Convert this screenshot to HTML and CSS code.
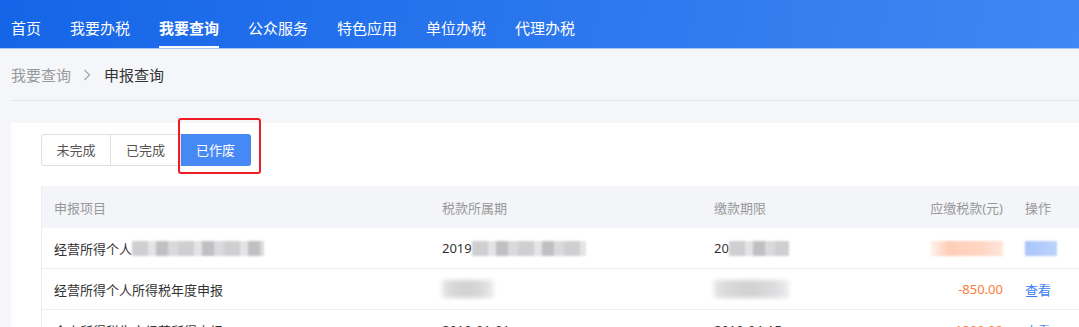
FILE: index.html
```html
<!DOCTYPE html>
<html lang="zh-CN">
<head>
    <meta charset="UTF-8">
    <title>申报查询</title>
    <link rel="stylesheet" href="styles.css">
</head>
<body>
<div class="nav">
    <a class="navItem">首页</a>
    <a class="navItem">我要办税</a>
    <a class="navItem active">我要查询</a>
    <a class="navItem">公众服务</a>
    <a class="navItem">特色应用</a>
    <a class="navItem">单位办税</a>
    <a class="navItem">代理办税</a>
</div>
<div class="main">
    <div class="crumb">
        <span class="crumbLink">我要查询</span>
        <svg class="chevron" width="8" height="12" viewBox="0 0 8 12"><path d="M1.5 1 L6.5 6 L1.5 11" fill="none" stroke="#a3a6ab" stroke-width="1.2"/></svg>
        <span class="crumbCur">申报查询</span>
    </div>
    <div class="card">
        <div class="tabs">
            <span class="tab">未完成</span>
            <span class="tab">已完成</span>
            <span class="tab on">已作废<i class="mark"></i></span>
        </div>
        <div class="table">
            <div class="row head">
                <span class="c1">申报项目</span>
                <span class="c2">税款所属期</span>
                <span class="c3">缴款期限</span>
                <span class="c4">应缴税款(元)</span>
                <span class="c5">操作</span>
            </div>
            <div class="row">
                <span class="c1">经营所得个人<i class="blur gray" style="width:132px"></i></span>
                <span class="c2">2019<i class="blur gray" style="width:114px"></i></span>
                <span class="c3">20<i class="blur gray" style="width:60px"></i></span>
                <span class="c4"><i class="blur orange" style="width:72px"></i></span>
                <span class="c5"><i class="blur blue" style="width:32px"></i></span>
            </div>
            <div class="row">
                <span class="c1">经营所得个人所得税年度申报</span>
                <span class="c2"><i class="blur gray soft" style="width:52px"></i></span>
                <span class="c3"><i class="blur gray soft" style="width:75px"></i></span>
                <span class="c4 money">-850.00</span>
                <span class="c5 link">查看</span>
            </div>
            <div class="row">
                <span class="c1">个人所得税生产经营所得申报</span>
                <span class="c2">2019-01-01</span>
                <span class="c3">2019-04-15</span>
                <span class="c4 money">-1200.00</span>
                <span class="c5 link">查看</span>
            </div>
        </div>
    </div>
</div>
</body>
</html>
```
FILE: styles.css
```css
body{
    margin: 0;
    overflow: hidden;
    background-color: #f4f6f9;
    font-family: "Noto Sans", "Noto Sans CJK SC", sans-serif;
}
.nav{
    display: flex;
    gap: 29px;
    height: 49px;
    padding-left: 11px;
    box-sizing: border-box;
    background: linear-gradient(100deg, #1565e8, #3f87f2);
    border-bottom: 1px solid #a9c6f5;
}
.navItem{
    padding-top: 10px;
    line-height: 36px;
    font-size: 15px;
    color: #fff;
    border-bottom: 2px solid transparent;
}
.navItem.active{
    font-weight: bold;
    border-bottom-color: #fff;
}
.main{
    width: 1130px;
    padding-left: 11px;
}
.crumb{
    display: flex;
    align-items: center;
    height: 51px;
    border-bottom: 1px solid #e4e6ea;
    font-size: 15px;
}
.crumbLink{
    color: #999;
}
.chevron{
    margin: 0 13px 0 12px;
}
.crumbCur{
    color: #333;
}
.card{
    margin-top: 22px;
    padding: 11px 0 0 30px;
    background-color: #fff;
}
.tabs{
    display: flex;
}
.tab{
    position: relative;
    width: 70px;
    height: 32px;
    line-height: 30px;
    box-sizing: border-box;
    text-align: center;
    font-size: 13px;
    color: #555;
    border: 1px solid #dcdfe6;
    border-left: none;
}
.tab:first-child{
    border-left: 1px solid #dcdfe6;
    border-radius: 3px 0 0 3px;
}
.tab.on{
    color: #fff;
    background-color: #4689f5;
    border-color: #4689f5;
    border-radius: 0 3px 3px 0;
}
.mark{
    position: absolute;
    left: -3px;
    top: -17px;
    width: 83px;
    height: 56px;
    box-sizing: border-box;
    border: 2px solid #ee1d23;
    border-radius: 3px;
}
.table{
    margin-top: 20px;
    border-left: 1px solid #ebeef2;
    font-size: 13px;
    color: #333;
}
.row{
    display: flex;
    align-items: center;
    height: 41px;
    box-sizing: border-box;
    border-bottom: 1px solid #ebeef2;
}
.row.head{
    height: 42px;
    background-color: #f3f5f9;
    color: #999;
    border-bottom: none;
}
.row span{
    display: flex;
    align-items: center;
    box-sizing: border-box;
}
.c1{
    width: 400px;
    padding-left: 12px;
}
.c2{
    width: 272px;
}
.c3{
    width: 200px;
}
.c4{
    width: 99px;
    padding-right: 10px;
    justify-content: flex-end;
}
.c5{
    padding-left: 12px;
}
.money{
    color: #fa7b35;
}
.link{
    color: #3b7ef2;
}
.blur{
    display: inline-block;
    height: 15px;
    filter: blur(1.2px);
}
.gray{
    background: repeating-linear-gradient(90deg, #cfcfd1 0 16px, #e4e4e6 16px 24px, #c0c0c2 24px 36px, #dadadc 36px 46px);
}
.gray.soft{
    height: 18px;
    background: linear-gradient(90deg, #e6e6e8, #d8d8da 20%, #d3d0d0 50%, #dcdcde 80%, #eeeef0);
    filter: blur(2px);
}
.orange{
    background: linear-gradient(90deg, #fff1ea, #ffcdb8 25%, #ffd6c4 70%, #ffe6da);
}
.blue{
    background: linear-gradient(90deg, #a9c5fb, #bcd2fc);
}
```
